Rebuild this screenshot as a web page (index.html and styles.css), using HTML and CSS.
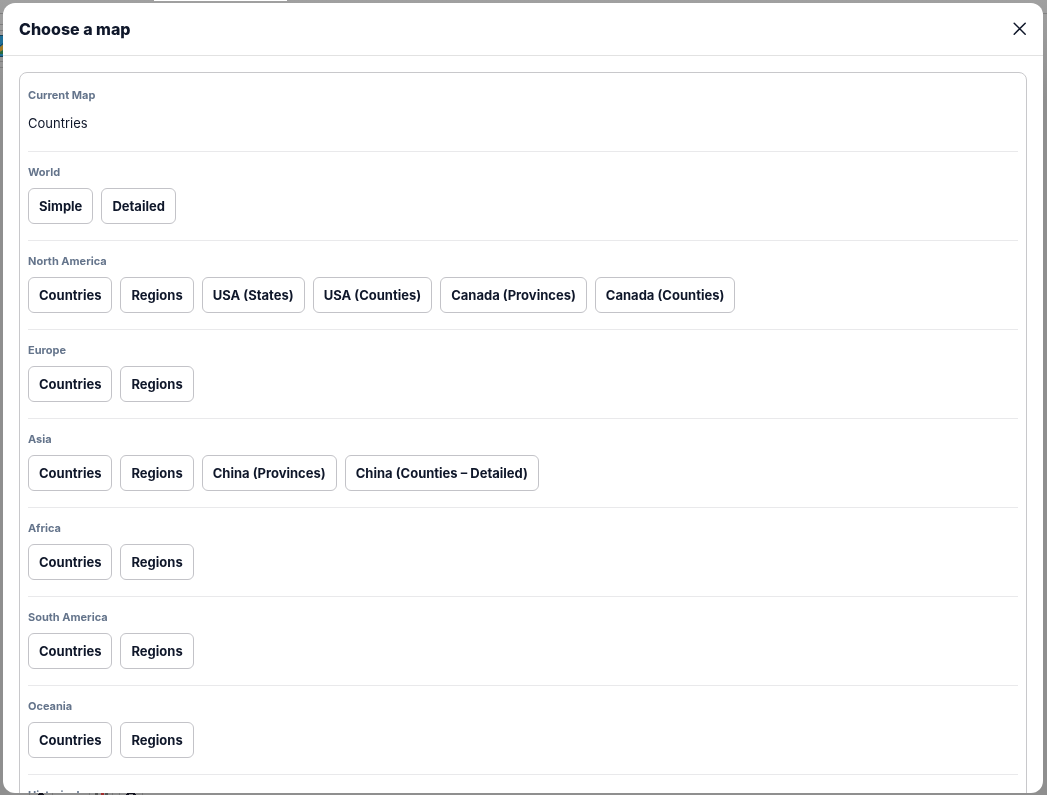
FILE: index.html
```html
<!DOCTYPE html>
<html lang="en">
<head>
<meta charset="utf-8">
<meta name="viewport" content="width=device-width, initial-scale=1">
<title>Choose a map</title>
<link rel="stylesheet" href="styles.css">
</head>
<body>
<div class="backdrop" aria-hidden="true">
  <div class="page-tab"></div>
  <svg class="page-map" width="5" height="60" viewBox="0 0 5 60">
    <path d="M0 5.500h5M0 16.500h5M0 22.500h5M0 53.500h5M0 59.500h5" stroke="#7d7d7d"/>
    <path d="M0 27h5v22H0z" fill="#1f6f98"/>
    <path d="M0 39l5-4v6l-5 3z" fill="#a47a25"/>
    <path d="M0 44l5-3v5H0z" fill="#286b3d"/>
    <path d="M0 27.500h5M0 48.500h5M0 38l5-4" stroke="#164057"/>
  </svg>
  <svg class="page-edge" width="5" height="2" viewBox="0 0 5 2"><path d="M0 .5h5" stroke="#808080"/></svg>
  <svg class="page-icons" width="120" height="2" viewBox="0 0 120 2">
    <path d="M1.500 0v2M24.500 0v2M61.500 0v2M84.500 0v2M91.500 0v2M114.500 0v2" stroke="#777"/>
    <path d="M11 0h4v1h1v1h-6V1h1zM99 0h8v1h1v1h-3V1h-4v1h-3V1h1z" fill="#10101c"/>
    <path d="M67 0h3v2h-3zM77 0h3v2h-3z" fill="#555"/>
    <path d="M73 0h3v2h-3z" fill="#a32d2d"/>
  </svg>
</div>
<div class="overlay">
  <section class="dialog" role="dialog" aria-modal="true" aria-labelledby="dialog-title">
    <header class="dialog-header">
      <h1 class="dialog-title" id="dialog-title">Choose a map</h1>
      <button class="close" type="button" aria-label="Close">
        <svg width="14" height="14" viewBox="0 0 14 14" fill="none" stroke="currentColor" stroke-width="1.500" stroke-linecap="round"><path d="M1.200 1.200l11 11M12.200 1.200l-11 11"/></svg>
      </button>
    </header>
    <div class="dialog-body">
      <div class="panel">
        <section class="group">
          <h2 class="group-title">Current Map</h2>
          <p class="current">Countries</p>
        </section>
        <section class="group">
          <h2 class="group-title">World</h2>
          <div class="options">
            <button class="option" type="button">Simple</button>
            <button class="option" type="button">Detailed</button>
          </div>
        </section>
        <section class="group">
          <h2 class="group-title">North America</h2>
          <div class="options">
            <button class="option" type="button">Countries</button>
            <button class="option" type="button">Regions</button>
            <button class="option" type="button">USA (States)</button>
            <button class="option" type="button">USA (Counties)</button>
            <button class="option" type="button">Canada (Provinces)</button>
            <button class="option" type="button">Canada (Counties)</button>
          </div>
        </section>
        <section class="group">
          <h2 class="group-title">Europe</h2>
          <div class="options">
            <button class="option" type="button">Countries</button>
            <button class="option" type="button">Regions</button>
          </div>
        </section>
        <section class="group">
          <h2 class="group-title">Asia</h2>
          <div class="options">
            <button class="option" type="button">Countries</button>
            <button class="option" type="button">Regions</button>
            <button class="option" type="button">China (Provinces)</button>
            <button class="option" type="button">China (Counties – Detailed)</button>
          </div>
        </section>
        <section class="group">
          <h2 class="group-title">Africa</h2>
          <div class="options">
            <button class="option" type="button">Countries</button>
            <button class="option" type="button">Regions</button>
          </div>
        </section>
        <section class="group">
          <h2 class="group-title">South America</h2>
          <div class="options">
            <button class="option" type="button">Countries</button>
            <button class="option" type="button">Regions</button>
          </div>
        </section>
        <section class="group">
          <h2 class="group-title">Oceania</h2>
          <div class="options">
            <button class="option" type="button">Countries</button>
            <button class="option" type="button">Regions</button>
          </div>
        </section>
        <section class="group">
          <h2 class="group-title">Historical</h2>
        </section>
      </div>
    </div>
  </section>
</div>
</body>
</html>
```

FILE: styles.css
```css
* {
  box-sizing: border-box;
}

body {
  margin: 0;
  font-family: Inter, "Liberation Sans", sans-serif;
  color: #0f172a;
}

h1, h2, p {
  margin: 0;
}

button {
  font: inherit;
  color: inherit;
  cursor: pointer;
}

/* Dimmed page behind the dialog */
.backdrop {
  position: fixed;
  inset: 0;
  overflow: hidden;
  background: linear-gradient(#a0a0a0, #8f8f8f 100px);
}

.page-tab {
  position: absolute;
  top: 0;
  left: 154px;
  width: 133px;
  height: 1px;
  background: #fff;
}

.page-map {
  position: absolute;
  top: 8px;
  left: 0;
}

.page-edge {
  position: absolute;
  top: 13px;
  right: 0;
}

.page-icons {
  position: absolute;
  bottom: 0;
  left: 28px;
}

.overlay {
  position: relative;
  display: flex;
  height: 100vh;
  padding: 3px 4px 2px 3px;
}

.dialog {
  display: flex;
  flex: 1;
  flex-direction: column;
  min-width: 0;
  overflow: hidden;
  background: #fff;
  border-radius: 12px;
}

.dialog-header {
  display: flex;
  flex-shrink: 0;
  align-items: center;
  justify-content: space-between;
  padding: 14px 16px;
  border-bottom: 1px solid #e2e2e2;
}

.dialog-title {
  font-size: 16px;
  font-weight: 800;
  line-height: 24px;
}

.close {
  display: flex;
  padding: 0;
  background: none;
  border: 0;
}

.dialog-body {
  flex: 1;
  min-height: 0;
  padding: 16px 16px 0;
  overflow: hidden;
}

.panel {
  padding: 2px 8px;
  border: 1px solid #c8c8cb;
  border-radius: 8px;
}

.group {
  padding: 12px 0 16px;
}

.group + .group {
  border-top: 1px solid #e9e9eb;
}

.group-title {
  margin-bottom: 8px;
  font-size: 11px;
  font-weight: 700;
  line-height: 16px;
  color: #64748b;
}

.current {
  font-size: 13px;
  line-height: 24px;
}

.options {
  display: flex;
  flex-wrap: wrap;
  gap: 8px;
}

.option {
  height: 36px;
  padding: 0 10px;
  font-size: 13px;
  font-weight: 700;
  background: #fff;
  border: 1px solid #c3c3c8;
  border-radius: 6px;
}
```
